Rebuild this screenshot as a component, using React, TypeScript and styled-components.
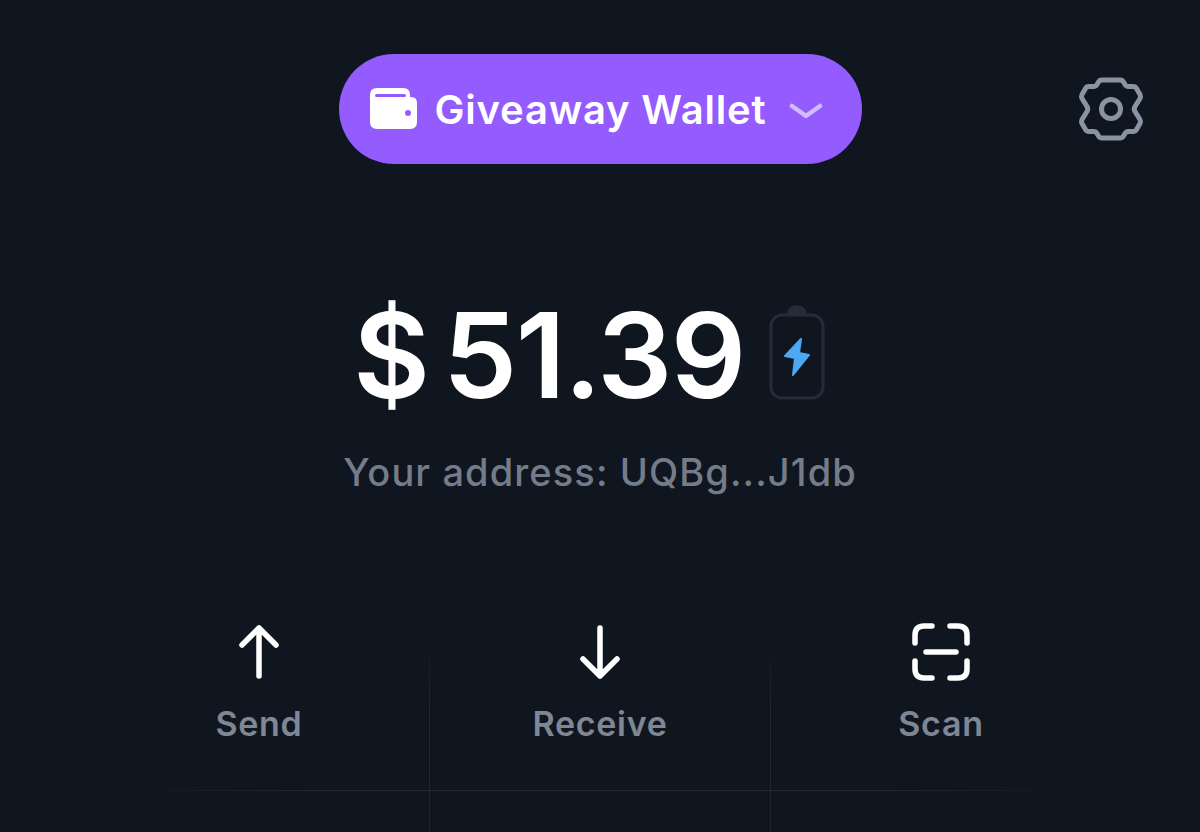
import React from "react";
import styled, { createGlobalStyle } from "styled-components";

const Global = createGlobalStyle`
  html, body { margin: 0; padding: 0; background: #10161f; }
  body { font-family: "Inter", "Open Sans", sans-serif; }
`;

const Page = styled.div`
  width: 1200px;
  height: 832px;
  overflow: hidden;
  background: #10161f;
  display: flex;
  flex-direction: column;
  align-items: center;
  padding-top: 54px;
  box-sizing: border-box;
`;

const Header = styled.header`
  width: 100%;
  display: grid;
  grid-template-columns: 1fr auto 1fr;
  align-items: center;
`;

const WalletPill = styled.div`
  grid-column: 2;
  width: 523px;
  height: 110px;
  box-sizing: border-box;
  border-radius: 55px;
  background: #945cff;
  display: flex;
  align-items: center;
  padding-left: 31px;
  color: #fff;
`;

const WalletName = styled.span`
  margin-left: 17px;
  font-size: 40px;
  font-weight: 600;
  letter-spacing: 0.8px;
  white-space: nowrap;
  flex: 1;
`;

const Chevron = styled.svg`
  margin-right: 39px;
  margin-top: 6px;
  flex: none;
`;

const SettingsIcon = styled.svg`
  justify-self: end;
  margin-right: 56px;
`;

const BalanceRow = styled.div`
  margin-top: 126px;
  margin-right: 21px;
  display: flex;
  align-items: center;
  color: #fff;
  height: 130px;
`;

const Currency = styled.span`
  font-size: 118px;
  font-weight: 600;
  line-height: 130px;
  margin-right: 13px;
`;

const Amount = styled.span`
  font-size: 118px;
  font-weight: 600;
  line-height: 130px;
  letter-spacing: -1.5px;
`;

const BatteryIcon = styled.svg`
  margin-left: 23px;
  margin-top: -6px;
  flex: none;
`;

const Address = styled.div`
  margin-top: 29px;
  font-size: 38px;
  font-weight: 500;
  letter-spacing: 1.1px;
  color: #747c8a;
  line-height: 46px;
  white-space: nowrap;
`;

const ActionGrid = styled.div`
  margin-top: 128px;
  width: 1023px;
  display: grid;
  grid-template-columns: repeat(3, 341px);
  grid-template-rows: 167px 1px 60px;
`;

const ActionCell = styled.div<{ $divider?: boolean }>`
  position: relative;
  display: flex;
  flex-direction: column;
  align-items: center;
  &::after {
    content: "";
    display: ${(p) => (p.$divider ? "block" : "none")};
    position: absolute;
    top: 20px;
    bottom: 0;
    right: 0;
    width: 1px;
    background: linear-gradient(to bottom, rgba(255, 255, 255, 0), rgba(255, 255, 255, 0.07) 40%);
  }
`;

const IconSlot = styled.div`
  height: 58px;
  display: flex;
  align-items: center;
  justify-content: center;
`;

const ActionLabel = styled.span`
  margin-top: 23px;
  font-size: 34px;
  line-height: 40px;
  font-weight: 600;
  letter-spacing: 0.7px;
  color: #7f8795;
`;

const Rule = styled.div`
  grid-column: 1 / -1;
  height: 1px;
  background: linear-gradient(
    to right,
    rgba(255, 255, 255, 0) 3%,
    rgba(255, 255, 255, 0.08) 22%,
    rgba(255, 255, 255, 0.08) 78%,
    rgba(255, 255, 255, 0) 97%
  );
`;

const TailCell = styled.div<{ $divider?: boolean }>`
  border-right: ${(p) => (p.$divider ? "1px solid rgba(255, 255, 255, 0.07)" : "none")};
`;

const Wallet = () => (
  <svg width="48" height="42" viewBox="0 0 48 42" style={{ flex: "none" }}>
    <path
      fill="#fff"
      d="M7 0H33Q40 0 40 7V9H41Q47 9 47 15V34Q47 41 40 41H7Q0 41 0 34V7Q0 0 7 0Z"
    />
    <rect x="5" y="6" width="31" height="3" rx="1.5" fill="#945cff" />
    <circle cx="38" cy="25" r="3" fill="#945cff" />
  </svg>
);

const Gear = () => (
  <SettingsIcon width="66" height="66" viewBox="-33 -33 66 66" fill="none" stroke="#8a93a2" strokeWidth="5" strokeLinejoin="round">
    <path d="M-9 -29H9Q11.5 -29 12.5 -27L14 -24.5Q15 -22.5 17.5 -22.5H22Q24.5 -22.5 25.5 -20.5L29 -14.5Q30 -12.5 29 -10.5L24 -2.5Q22.5 0 24 2.5L29 10.5Q30 12.5 29 14.5L25.5 20.5Q24.5 22.5 22 22.5H17.5Q15 22.5 14 24.5L12.5 27Q11.5 29 9 29H-9Q-11.5 29 -12.5 27L-14 24.5Q-15 22.5 -17.5 22.5H-22Q-24.5 22.5 -25.5 20.5L-29 14.5Q-30 12.5 -29 10.5L-24 2.5Q-22.5 0 -24 -2.5L-29 -10.5Q-30 -12.5 -29 -14.5L-25.5 -20.5Q-24.5 -22.5 -22 -22.5H-17.5Q-15 -22.5 -14 -24.5L-12.5 -27Q-11.5 -29 -9 -29Z" />
    <circle r="9.5" />
  </SettingsIcon>
);

const Battery = () => (
  <BatteryIcon width="58" height="100" viewBox="0 0 58 100" fill="none">
    <path d="M19 13C19 0 39 0 39 13Z" fill="#252b38" />
    <rect x="3" y="13" width="52" height="83" rx="11" stroke="#252b38" strokeWidth="3" />
    <path
      d="M33 37L17 54L27 56L25 73L41 53L31 51Z"
      fill="#4aa8f5"
      stroke="#4aa8f5"
      strokeWidth="2"
      strokeLinejoin="round"
    />
  </BatteryIcon>
);

const Arrow = ({ down }: { down?: boolean }) => (
  <svg width="44" height="56" viewBox="0 0 44 56" fill="none" stroke="#fff" strokeWidth="5.5" strokeLinecap="round" strokeLinejoin="round">
    {down ? <path d="M22 4V52M5 35L22 52L39 35" /> : <path d="M22 52V4M5 21L22 4L39 21" />}
  </svg>
);

const Scan = () => (
  <svg width="58" height="58" viewBox="0 0 58 58" fill="none" stroke="#fff" strokeWidth="5.5" strokeLinecap="round" strokeLinejoin="round">
    <path d="M3 20V12Q3 3 12 3H20M38 3H46Q55 3 55 12V20M55 38V46Q55 55 46 55H38M20 55H12Q3 55 3 46V38M14 29H44" />
  </svg>
);

export default function App() {
  return (
    <Page>
      <Global />
      <Header>
        <WalletPill>
          <Wallet />
          <WalletName>Giveaway Wallet</WalletName>
          <Chevron width="34" height="18" viewBox="0 0 34 18" fill="none" stroke="#d2bcff" strokeWidth="4.5" strokeLinecap="round" strokeLinejoin="round">
            <path d="M3 3L17 13L31 3" />
          </Chevron>
        </WalletPill>
        <Gear />
      </Header>
      <BalanceRow>
        <Currency>$</Currency>
        <Amount>51.39</Amount>
        <Battery />
      </BalanceRow>
      <Address>Your address: UQBg...J1db</Address>
      <ActionGrid>
        <ActionCell $divider>
          <IconSlot><Arrow /></IconSlot>
          <ActionLabel>Send</ActionLabel>
        </ActionCell>
        <ActionCell $divider>
          <IconSlot><Arrow down /></IconSlot>
          <ActionLabel>Receive</ActionLabel>
        </ActionCell>
        <ActionCell>
          <IconSlot><Scan /></IconSlot>
          <ActionLabel>Scan</ActionLabel>
        </ActionCell>
        <Rule />
        <TailCell $divider />
        <TailCell $divider />
        <TailCell />
      </ActionGrid>
    </Page>
  );
}
